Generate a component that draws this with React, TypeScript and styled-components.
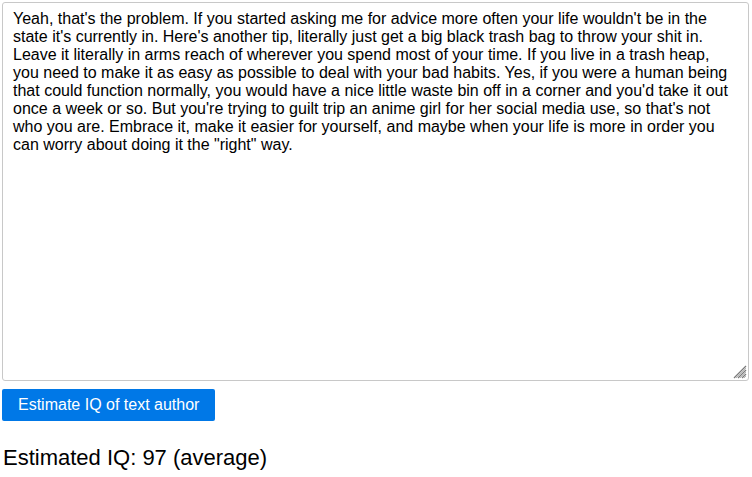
import styled, { createGlobalStyle } from "styled-components";

const GlobalStyle = createGlobalStyle`
  body {
    margin: 0;
    background: #ffffff;
    font-family: "Liberation Sans", Arial, sans-serif;
  }
`;

const Page = styled.div`
  display: flex;
  flex-direction: column;
  align-items: flex-start;
  padding: 2px 3px 0 2px;
`;

const Field = styled.div`
  position: relative;
  width: 100%;
  height: 379px;
`;

const TextInput = styled.textarea`
  box-sizing: border-box;
  display: block;
  width: 100%;
  height: 100%;
  padding: 7px 10px;
  border: 1px solid #c8c8c8;
  border-radius: 3px;
  font-family: "Liberation Sans", Arial, sans-serif;
  font-size: 16px;
  line-height: normal;
  color: #000000;
  background: #ffffff;
  resize: none;
  outline: none;
`;

const Grip = styled.svg`
  position: absolute;
  right: 2px;
  bottom: 2px;
  width: 14px;
  height: 14px;
  pointer-events: none;
`;

const EstimateButton = styled.button`
  margin-top: 8px;
  padding: 7px 16px;
  border: none;
  border-radius: 2px;
  background-color: #0078e7;
  color: #ffffff;
  font-family: "Liberation Sans", Arial, sans-serif;
  font-size: 16px;
  line-height: normal;
  cursor: pointer;
`;

const Result = styled.p`
  margin: 24px 0 0 1px;
  font-size: 22px;
  color: #000000;
`;

const sample = `Yeah, that's the problem. If you started asking me for advice more often your life wouldn't be in the state it's currently in. Here's another tip, literally just get a big black trash bag to throw your shit in. Leave it literally in arms reach of wherever you spend most of your time. If you live in a trash heap, you need to make it as easy as possible to deal with your bad habits. Yes, if you were a human being that could function normally, you would have a nice little waste bin off in a corner and you'd take it out once a week or so. But you're trying to guilt trip an anime girl for her social media use, so that's not who you are. Embrace it, make it easier for yourself, and maybe when your life is more in order you can worry about doing it the "right" way.`;

const App = () => {
  return (
    <Page>
      <GlobalStyle />
      <Field>
        <TextInput defaultValue={sample} spellCheck={false} />
        <Grip viewBox="0 0 14 14">
          <g stroke="#7a7a7a" strokeWidth="1.2">
            <line x1="13" y1="1" x2="1" y2="13" />
            <line x1="13" y1="5" x2="5" y2="13" />
            <line x1="13" y1="9" x2="9" y2="13" />
          </g>
          <g stroke="#b5b5b5" strokeWidth="1">
            <line x1="13" y1="3" x2="3" y2="13" />
            <line x1="13" y1="7" x2="7" y2="13" />
            <line x1="13" y1="11" x2="11" y2="13" />
          </g>
        </Grip>
      </Field>
      <EstimateButton>Estimate IQ of text author</EstimateButton>
      <Result>Estimated IQ: 97 (average)</Result>
    </Page>
  );
};

export default App;
